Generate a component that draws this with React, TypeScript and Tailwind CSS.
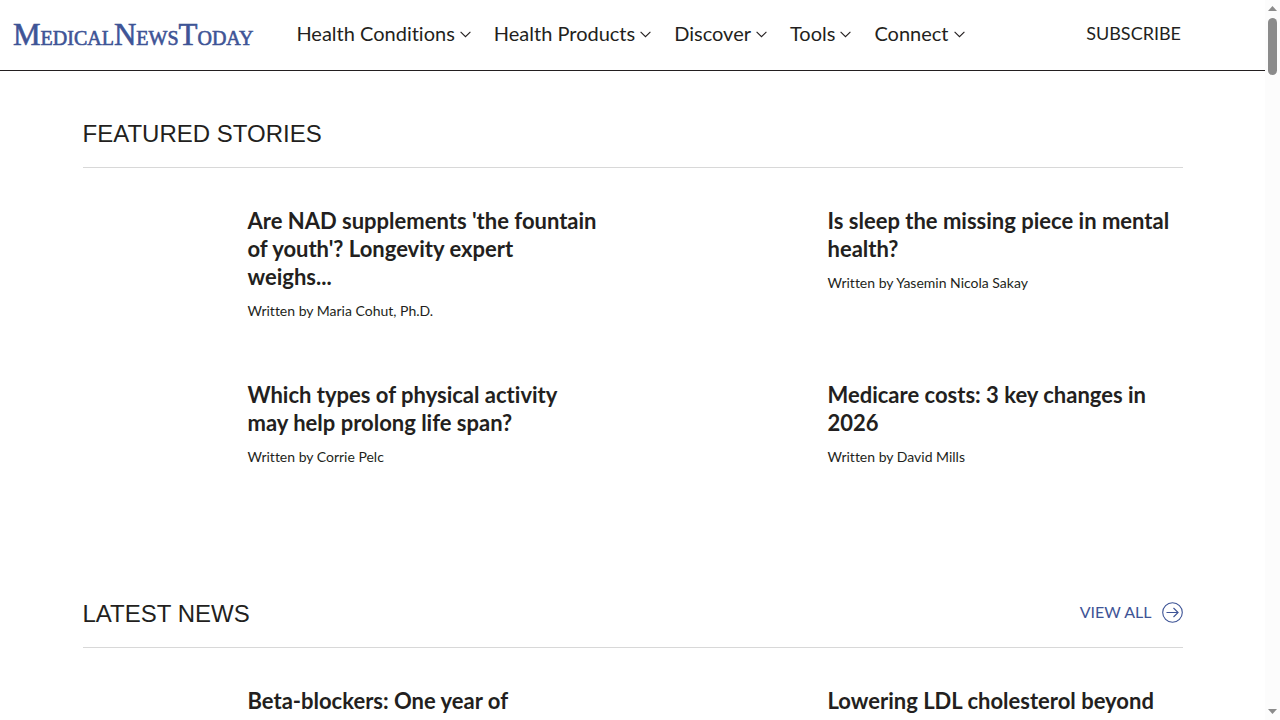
type Story = { title: string; author: string };

const menu = ["Health Conditions", "Health Products", "Discover", "Tools", "Connect"];

const featured: Story[] = [
  { title: "Are NAD supplements 'the fountain of youth'? Longevity expert weighs...", author: "Maria Cohut, Ph.D." },
  { title: "Is sleep the missing piece in mental health?", author: "Yasemin Nicola Sakay" },
  { title: "Which types of physical activity may help prolong life span?", author: "Corrie Pelc" },
  { title: "Medicare costs: 3 key changes in 2026", author: "David Mills" },
];

const latest: Story[] = [
  { title: "Beta-blockers: One year of", author: "" },
  { title: "Lowering LDL cholesterol beyond", author: "" },
];

export default function App() {
  return (
    <div className="flex h-screen overflow-hidden bg-white font-['Lato','Open_Sans',sans-serif] text-[#231f20] [font-variant-ligatures:none]">
      <div className="min-w-0 flex-1 overflow-hidden">
        <Header />
        <main className="mx-auto max-w-[1100px]">
          <section className="min-h-[480px] pt-10">
            <SectionTitle title="Featured Stories" />
            <StoryGrid stories={featured} />
          </section>
          <section className="pt-10">
            <SectionTitle title="Latest News" viewAll />
            <StoryGrid stories={latest} />
          </section>
        </main>
      </div>
      <ScrollRail />
    </div>
  );
}

function Header() {
  return (
    <header className="flex h-[71px] items-center border-b border-[#231f20] pr-[84px] pb-1 pl-[13px]">
      <Logo />
      <nav className="ml-[43px] flex items-center gap-[23px]">
        {menu.map((item) => (
          <button key={item} type="button" className="flex items-center gap-[5px] text-[20px] leading-7 whitespace-nowrap">
            {item}
            <svg width="11" height="7" viewBox="0 0 11 7" fill="none" stroke="currentColor" strokeWidth="1.1" className="mt-[3px]" aria-hidden="true">
              <path d="M.6 .8 5.5 5.7 10.4 .8" />
            </svg>
          </button>
        ))}
      </nav>
      <a href="#subscribe" className="ml-auto text-[18px] leading-7">SUBSCRIBE</a>
    </header>
  );
}

function Logo() {
  return (
    <a href="#home" aria-label="Medical News Today" className="mt-[6px] font-['Liberation_Serif',serif] text-[20px] leading-8 whitespace-nowrap text-[#3e5496] [-webkit-text-stroke:0.6px_#3e5496]">
      <span className="text-[31px]">M</span>EDICAL<span className="text-[31px]">N</span>EWS<span className="text-[31px]">T</span>ODAY
    </a>
  );
}

function SectionTitle({ title, viewAll = false }: { title: string; viewAll?: boolean }) {
  return (
    <div className="flex h-[57px] items-start justify-between border-b border-[#d8d8d8] pt-[7px]">
      <h2 className="font-['Liberation_Sans',Arial,sans-serif] text-[24px] leading-8 uppercase">{title}</h2>
      {viewAll && (
        <a href="#latest" className="flex items-center gap-[10px] text-[16px] leading-7 text-[#3e5496]">
          VIEW ALL
          <svg width="21" height="21" viewBox="0 0 21 21" fill="none" stroke="currentColor" strokeWidth="1.1" aria-hidden="true">
            <circle cx="10.5" cy="10.5" r="9.8" />
            <path d="M4.5 10.5H16M11.5 6l4.6 4.5-4.6 4.5" />
          </svg>
        </a>
      )}
    </div>
  );
}

function StoryGrid({ stories }: { stories: Story[] }) {
  return (
    <div className="grid grid-cols-2 gap-[60px] pt-[39px]">
      {stories.map((story) => (
        <article key={story.title} className="pr-1 pl-[165px]">
          <h3 className="text-[22px] leading-7 font-bold">
            <a href="#story">{story.title}</a>
          </h3>
          {story.author && <p className="mt-[10px] text-[14px] leading-5">Written by {story.author}</p>}
        </article>
      ))}
    </div>
  );
}

function ScrollRail() {
  return (
    <div className="flex w-[15px] flex-col items-center bg-[#fcfcfc] py-[6px] text-[#8b8b8b]" aria-hidden="true">
      <svg width="9" height="5" viewBox="0 0 9 5" fill="currentColor">
        <path d="M0 5 4.5 0 9 5z" />
      </svg>
      <div className="mt-[7px] h-[57px] w-[9px] rounded-full bg-[#8b8b8b]" />
      <svg width="9" height="5" viewBox="0 0 9 5" fill="currentColor" className="mt-auto">
        <path d="M0 0h9L4.5 5z" />
      </svg>
    </div>
  );
}
